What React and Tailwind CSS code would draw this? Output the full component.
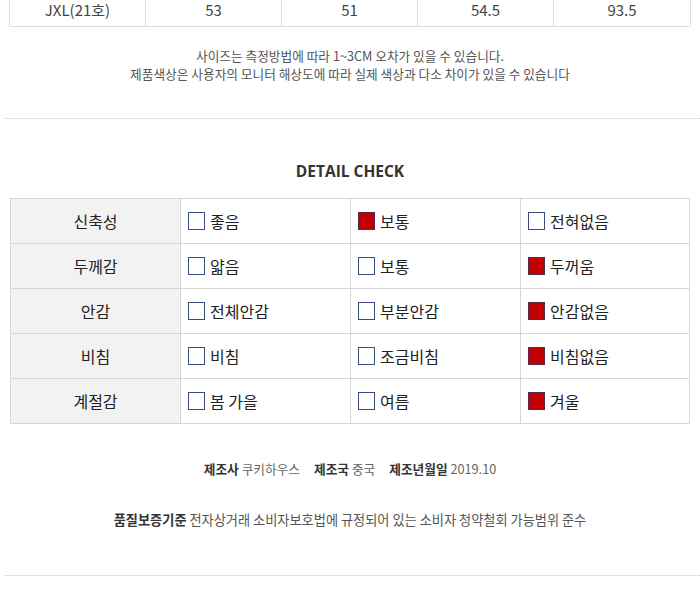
import React from 'react';

const font = { fontFamily: '"Noto Sans CJK KR", "Noto Sans", sans-serif' };

const sizeRow = ['JXL(21호)', '53', '51', '54.5', '93.5'];

const detailRows = [
    { label: '신축성', options: ['좋음', '보통', '전혀없음'], checked: 1 },
    { label: '두께감', options: ['얇음', '보통', '두꺼움'], checked: 2 },
    { label: '안감', options: ['전체안감', '부분안감', '안감없음'], checked: 2 },
    { label: '비침', options: ['비침', '조금비침', '비침없음'], checked: 2 },
    { label: '계절감', options: ['봄 가을', '여름', '겨울'], checked: 2 },
];

const CheckBox = ({ on }) => (
    <span
        className={`inline-block w-[17px] h-[18px] shrink-0 border ${
            on ? 'bg-[#c00000] border-[#5a2a4a]' : 'bg-white border-[#3b4d80]'
        }`}
    />
);

const App = () => {
    return (
        <div className="w-[700px] h-[609px] bg-white overflow-hidden text-[#333]" style={font}>
            {/* size table (last row) */}
            <div className="mx-[9px] w-[681px] grid grid-cols-[136px_136px_136px_136px_137px] border-l border-b border-[#dcdcdc]">
                {sizeRow.map((v) => (
                    <div
                        key={v}
                        className="h-[26px] border-r border-[#dcdcdc] flex justify-center text-[15px] leading-[20px] text-[#444]"
                    >
                        {v}
                    </div>
                ))}
            </div>

            {/* notes */}
            <div className="mt-[20px] text-center text-[12.7px] leading-[18px] text-[#555]">
                <p>사이즈는 측정방법에 따라 1~3CM 오차가 있을 수 있습니다.</p>
                <p>제품색상은 사용자의 모니터 해상도에 따라 실제 색상과 다소 차이가 있을 수 있습니다</p>
            </div>

            <div className="mt-[35px] ml-[5px] border-t border-dotted border-[#c8c8c8]" />

            {/* detail check */}
            <h2
                className="mt-[42px] text-center text-[15.5px] leading-[20px] font-bold text-[#333]"
                style={{ fontFamily: '"Open Sans", "Noto Sans", sans-serif' }}
            >
                DETAIL CHECK
            </h2>

            <div className="mt-[17px] mx-[10px] w-[680px] border-t border-l border-[#d6d6d6]">
                {detailRows.map((row) => (
                    <div key={row.label} className="grid grid-cols-[170px_170px_170px_169px] h-[45px]">
                        <div className="bg-[#f2f2f2] border-r border-b border-[#d6d6d6] flex items-center justify-center text-[16px] text-[#222]">
                            {row.label}
                        </div>
                        {row.options.map((opt, i) => (
                            <div
                                key={opt + i}
                                className="border-r border-b border-[#d6d6d6] flex items-center gap-[5px] pl-[7px] text-[16px] text-[#222]"
                            >
                                <CheckBox on={i === row.checked} />
                                <span>{opt}</span>
                            </div>
                        ))}
                    </div>
                ))}
            </div>

            {/* product info */}
            <div className="mt-[36px] text-center text-[12.7px] leading-[18px] text-[#666]">
                <span className="font-bold text-[#333]">제조사</span> 쿠키하우스
                <span className="ml-[14px] font-bold text-[#333]">제조국</span> 중국
                <span className="ml-[14px] font-bold text-[#333]">제조년월일</span> 2019.10
            </div>

            <div className="mt-[33px] text-center text-[13.2px] leading-[18px] text-[#555]">
                <span className="font-bold text-[#333]">품질보증기준</span> 전자상거래 소비자보호법에 규정되어 있는 소비자 청약철회 가능범위 준수
            </div>

            <div className="mt-[46px] ml-[5px] border-t border-dotted border-[#c8c8c8]" />
        </div>
    );
};

export default App;
